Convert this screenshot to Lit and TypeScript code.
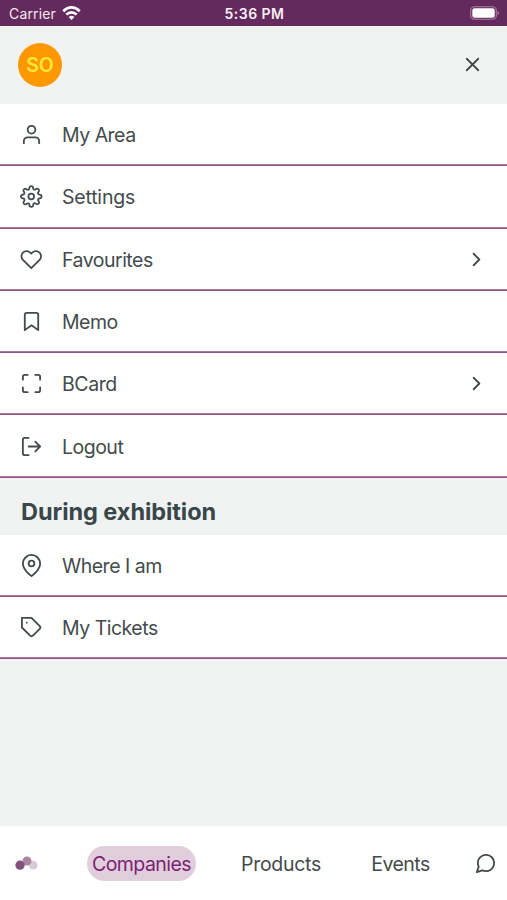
import { LitElement, html, css, svg, nothing } from "lit";
import { customElement } from "lit/decorators.js";

const icons: Record<string, unknown> = {
  user: svg`<path d="M20 21v-2a4 4 0 0 0-4-4H8a4 4 0 0 0-4 4v2"/><circle cx="12" cy="7" r="4"/>`,
  settings: svg`<circle cx="12" cy="12" r="3"/><path d="M19.4 15a1.65 1.65 0 0 0 .33 1.82l.06.06a2 2 0 0 1 0 2.83 2 2 0 0 1-2.83 0l-.06-.06a1.65 1.65 0 0 0-1.82-.33 1.65 1.65 0 0 0-1 1.51V21a2 2 0 0 1-2 2 2 2 0 0 1-2-2v-.09A1.65 1.65 0 0 0 9 19.4a1.65 1.65 0 0 0-1.82.33l-.06.06a2 2 0 0 1-2.83 0 2 2 0 0 1 0-2.83l.06-.06a1.65 1.65 0 0 0 .33-1.82 1.65 1.65 0 0 0-1.51-1H3a2 2 0 0 1-2-2 2 2 0 0 1 2-2h.09A1.65 1.65 0 0 0 4.6 9a1.65 1.65 0 0 0-.33-1.82l-.06-.06a2 2 0 0 1 0-2.83 2 2 0 0 1 2.83 0l.06.06a1.65 1.65 0 0 0 1.82.33H9a1.65 1.65 0 0 0 1-1.51V3a2 2 0 0 1 2-2 2 2 0 0 1 2 2v.09a1.65 1.65 0 0 0 1 1.51 1.65 1.65 0 0 0 1.82-.33l.06-.06a2 2 0 0 1 2.83 0 2 2 0 0 1 0 2.83l-.06.06a1.65 1.65 0 0 0-.33 1.82V9a1.65 1.65 0 0 0 1.51 1H21a2 2 0 0 1 2 2 2 2 0 0 1-2 2h-.09a1.65 1.65 0 0 0-1.51 1z"/>`,
  heart: svg`<path d="M20.84 4.61a5.5 5.5 0 0 0-7.78 0L12 5.67l-1.06-1.06a5.5 5.5 0 0 0-7.78 7.78l1.06 1.06L12 21.23l7.78-7.78 1.06-1.06a5.5 5.5 0 0 0 0-7.78z"/>`,
  bookmark: svg`<path d="M19 21l-7-5-7 5V5a2 2 0 0 1 2-2h10a2 2 0 0 1 2 2z"/>`,
  scan: svg`<path d="M8 3H5a2 2 0 0 0-2 2v3m18 0V5a2 2 0 0 0-2-2h-3m0 18h3a2 2 0 0 0 2-2v-3M3 16v3a2 2 0 0 0 2 2h3"/>`,
  logout: svg`<path d="M9 3H5a2 2 0 0 0-2 2v14a2 2 0 0 0 2 2h4M16 17l5-5-5-5M21 12H9"/>`,
  pin: svg`<path d="M21 10c0 7-9 13-9 13s-9-6-9-13a9 9 0 0 1 18 0z"/><circle cx="12" cy="10" r="3"/>`,
  tag: svg`<path d="M20.59 13.41l-7.17 7.17a2 2 0 0 1-2.83 0L2 12V2h10l8.59 8.59a2 2 0 0 1 0 2.82zM7 7h.01"/>`,
  chevron: svg`<path d="M9 18l6-6-6-6"/>`,
  close: svg`<path d="M18 6L6 18M6 6l12 12"/>`,
  chat: svg`<path d="M21 11.5a8.38 8.38 0 0 1-.9 3.8 8.5 8.5 0 0 1-7.6 4.7 8.38 8.38 0 0 1-3.8-.9L3 21l1.9-5.7a8.38 8.38 0 0 1-.9-3.8 8.5 8.5 0 0 1 4.7-7.6 8.38 8.38 0 0 1 3.8-.9h.5a8.48 8.48 0 0 1 8 8v.5z"/>`,
};

const icon = (name: string) =>
  html`<svg class="icon ${name}" viewBox="0 0 24 24" aria-hidden="true">${icons[name]}</svg>`;

interface Item {
  icon: string;
  label: string;
  more?: boolean;
}

const mainItems: Item[] = [
  { icon: "user", label: "My Area" },
  { icon: "settings", label: "Settings" },
  { icon: "heart", label: "Favourites", more: true },
  { icon: "bookmark", label: "Memo" },
  { icon: "scan", label: "BCard", more: true },
  { icon: "logout", label: "Logout" },
];

const exhibitionItems: Item[] = [
  { icon: "pin", label: "Where I am" },
  { icon: "tag", label: "My Tickets" },
];

@customElement("app-root")
export class AppRoot extends LitElement {
  static styles = css`
    :host {
      display: flex;
      flex-direction: column;
      height: 900px;
      overflow: hidden;
      background: #f0f3f2;
      color: #434b4d;
      font: 19.5px/24px Inter, "Liberation Sans", sans-serif;
    }
    .icon {
      display: block;
      flex: none;
      width: 23px;
      height: 23px;
      fill: none;
      stroke: currentColor;
      stroke-width: 1.9;
      stroke-linecap: round;
      stroke-linejoin: round;
      overflow: visible;
    }
    .settings { width: 22.5px; margin-right: 0.5px; }
    .heart { width: 22.5px; margin-right: 0.5px; }
    .status {
      box-sizing: border-box;
      display: grid;
      grid-template-columns: 1fr auto 1fr;
      align-items: center;
      height: 25.5px;
      padding: 2px 7px 0 9px;
      background: #652a5d;
      color: #f3e8f2;
      font-size: 14px;
      line-height: 20px;
    }
    .carrier { display: flex; align-items: center; gap: 6px; letter-spacing: 0.15px; }
    .wifi { width: 19px; height: 15px; }
    .time { font-weight: 600; font-size: 14px; letter-spacing: 0.45px; color: #f8eff7; }
    .battery { justify-self: end; width: 30px; height: 15px; }
    .header {
      box-sizing: border-box;
      display: flex;
      align-items: center;
      justify-content: space-between;
      height: 78.5px;
      padding: 0 23px 0.5px 18px;
    }
    .avatar {
      display: grid;
      place-items: center;
      width: 44px;
      height: 44px;
      border-radius: 50%;
      background: #ff9800;
      color: #ffe83b;
      font-size: 19.5px;
      font-weight: 600;
    }
    .row {
      box-sizing: border-box;
      display: flex;
      align-items: center;
      height: 62.3px;
      padding: 0 19px 1.2px 20px;
      background: linear-gradient(#b98ab3, #853f7c) bottom / 100% 2px no-repeat #fff;
    }
    .label { flex: 1; margin-left: 19px; padding-top: 1px; letter-spacing: -0.5px; }
    .settings + .label { letter-spacing: -0.2px; }
    .scan + .label { letter-spacing: -0.4px; }
    .section {
      box-sizing: border-box;
      height: 57px;
      margin: 0;
      padding: 19px 21px 0;
      color: #39464a;
      font-size: 23.5px;
      letter-spacing: -0.06px;
      line-height: 30px;
      font-weight: 700;
    }
    .tabs {
      box-sizing: border-box;
      display: flex;
      align-items: center;
      height: 74px;
      margin-top: auto;
      padding: 0 10px 0 15px;
      background: #fff;
    }
    .dots { width: 23px; height: 14px; }
    .tab {
      flex: none;
      height: 35px;
      line-height: 37px;
      text-align: center;
      letter-spacing: -0.3px;
      white-space: nowrap;
    }
    .active {
      width: 109px;
      margin-left: 49px;
      border-radius: 18px;
      background: #e1cedd;
      color: #7b2273;
      letter-spacing: -0.55px;
    }
    .products { margin-left: 45px; width: 80px; }
    .events { margin-left: 50px; width: 59px; letter-spacing: -0.5px; }
    .chat { margin-left: auto; }
  `;

  private row(item: Item) {
    return html`<div class="row">
      ${icon(item.icon)}<span class="label">${item.label}</span>
      ${item.more ? icon("chevron") : nothing}
    </div>`;
  }

  render() {
    return html`
      <div class="status">
        <span class="carrier">Carrier
          <svg class="wifi" viewBox="0 0 19 15" fill="none" stroke="#fff" stroke-width="2.7">
            <path d="M1.2 5.2Q9.5-2.3 17.8 5.2M4.3 8.6Q9.5 4 14.7 8.6" />
            <path d="M6.6 11Q9.5 8.5 12.4 11L9.5 14z" fill="#fff" stroke="none" />
          </svg>
        </span>
        <span class="time">5:36 PM</span>
        <svg class="battery" viewBox="0 0 30 15">
          <rect x=".7" y=".7" width="25.6" height="12.6" rx="3.7" fill="none" stroke="#a781a2" stroke-width="1.1" />
          <rect x="2.3" y="2.3" width="22.4" height="9.4" rx="2.2" fill="#fff" />
          <path d="M27.7 4.7Q30.5 7 27.7 9.3z" fill="#a781a2" />
        </svg>
      </div>
      <header class="header">
        <div class="avatar">SO</div>
        ${icon("close")}
      </header>
      <nav>${mainItems.map((i) => this.row(i))}</nav>
      <h2 class="section">During exhibition</h2>
      <nav>${exhibitionItems.map((i) => this.row(i))}</nav>
      <footer class="tabs">
        <svg class="dots" viewBox="0 0 23 14">
          <circle cx="18.2" cy="9.2" r="4.4" fill="#d9cad9" />
          <circle cx="12" cy="5" r="4.5" fill="#aa86a5" />
          <circle cx="5" cy="9.2" r="4.6" fill="#81527c" />
        </svg>
        <span class="tab active">Companies</span>
        <span class="tab products">Products</span>
        <span class="tab events">Events</span>
        ${icon("chat")}
      </footer>
    `;
  }
}
